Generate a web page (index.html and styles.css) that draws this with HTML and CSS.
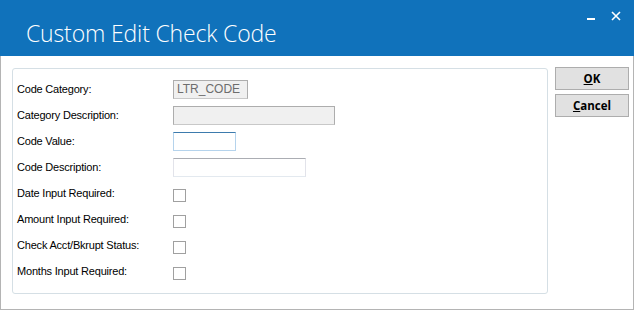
FILE: index.html
```html
<!DOCTYPE html>
<html lang="en">
<head>
    <meta charset="UTF-8">
    <title>Custom Edit Check Code</title>
    <link rel="stylesheet" href="styles.css">
</head>
<body>
    <div class="window">
        <!-- title bar -->
        <div class="titlebar">
            <h1>Custom Edit Check Code</h1>
            <div class="caption-buttons">
                <svg class="btn-min" width="8" height="2" viewBox="0 0 8 2"><rect width="8" height="2" fill="#fff"/></svg>
                <svg class="btn-close" width="10" height="10" viewBox="0 0 10 10"><path d="M1 1 L9 9 M9 1 L1 9" stroke="#fff" stroke-width="1.6"/></svg>
            </div>
        </div>

        <div class="content">
            <!-- fields -->
            <div class="group">
                <div class="row">
                    <label>Code Category:</label>
                    <div class="field disabled w-code">LTR_CODE</div>
                </div>
                <div class="row">
                    <label>Category Description:</label>
                    <div class="field disabled w-catdesc"></div>
                </div>
                <div class="row">
                    <label>Code Value:</label>
                    <div class="field focus w-value"></div>
                </div>
                <div class="row">
                    <label>Code Description:</label>
                    <div class="field w-desc"></div>
                </div>
                <div class="row">
                    <label>Date Input Required:</label>
                    <span class="check"></span>
                </div>
                <div class="row">
                    <label>Amount Input Required:</label>
                    <span class="check"></span>
                </div>
                <div class="row">
                    <label>Check Acct/Bkrupt Status:</label>
                    <span class="check"></span>
                </div>
                <div class="row">
                    <label>Months Input Required:</label>
                    <span class="check"></span>
                </div>
            </div>

            <!-- buttons -->
            <div class="actions">
                <button><u>O</u>K</button>
                <button><u>C</u>ancel</button>
            </div>
        </div>
    </div>
</body>
</html>
```

FILE: styles.css
```css
body {
    margin: 0;
    background-color: #fff;
    font-family: "Liberation Sans", Arial, sans-serif;
}
.window {
    width: 634px;
    height: 310px;
    display: flex;
    flex-direction: column;
}
.titlebar {
    height: 56px;
    background-color: #1072bb;
    display: flex;
    justify-content: space-between;
    flex-shrink: 0;
}
.titlebar h1 {
    margin: 0;
    padding: 17px 0 0 26px;
    font-family: "Open Sans", sans-serif;
    font-weight: 300;
    font-size: 23px;
    letter-spacing: -0.15px;
    color: #fff;
}
.caption-buttons {
    display: flex;
    align-items: flex-start;
    padding: 11px 13px 0 0;
}
.btn-min {
    margin: 7px 16px 0 0;
}
.content {
    flex: 1;
    display: flex;
    align-items: flex-start;
    padding: 12px 4px 0 11px;
    border: 1px solid #b4b4b4;
    border-top: none;
}
.group {
    width: 536px;
    height: 226px;
    flex-shrink: 0;
    padding: 7px 0 0 4px;
    box-sizing: border-box;
    border: 1px solid #d5dfe5;
    border-radius: 3px;
}
.row {
    height: 26px;
    display: flex;
    align-items: center;
}
.row label {
    width: 156px;
    font-size: 11px;
    letter-spacing: -0.2px;
    color: #000;
}
.field {
    height: 19px;
    box-sizing: border-box;
    border: 1px solid #e2e3ea;
    border-top-color: #abadb3;
    border-bottom-color: #e3e9ef;
    background-color: #fff;
    font-size: 12px;
    line-height: 17px;
    padding-left: 3px;
    color: #6d6d6d;
}
.field.disabled {
    background-color: #f0f0f0;
    border: 1px solid #adadad;
    border-bottom-color: #c8c8c8;
}
.field.focus {
    border-color: #b5d3ec;
    border-top-color: #3d7bad;
}
.w-code { width: 75px; }
.w-catdesc { width: 162px; }
.w-value { width: 63px; }
.w-desc { width: 133px; }
.check {
    width: 13px;
    height: 13px;
    box-sizing: border-box;
    border: 1px solid #a0a0a0;
    margin-top: 5px;
    background-color: #fff;
}
.actions {
    display: flex;
    flex-direction: column;
    gap: 4px;
    margin-left: 7px;
    margin-top: -1px;
}
button {
    width: 74px;
    height: 23px;
    background-color: #e1e1e1;
    border: 1px solid #adadad;
    font-family: "Open Sans", sans-serif;
    font-weight: 700;
    font-size: 11.5px;
    color: #000;
    padding: 0;
}
```
